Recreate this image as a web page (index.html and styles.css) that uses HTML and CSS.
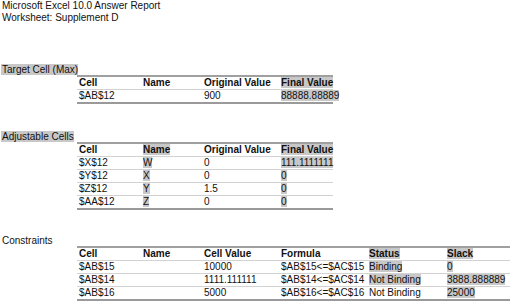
FILE: index.html
```html
<!DOCTYPE html>
<html>
<head>
<meta charset="utf-8">
<link rel="stylesheet" href="styles.css">
</head>
<body>
<div class="report">
  <div class="title">Microsoft Excel 10.0 Answer Report</div>
  <div class="title">Worksheet: Supplement D</div>

  <div class="label label-target"><span class="hl">Target Cell (Max)</span></div>
  <table class="grid grid-narrow">
    <colgroup><col class="c1"><col class="c2"><col class="c3"><col class="c4n"></colgroup>
    <thead>
      <tr><th>Cell</th><th>Name</th><th>Original Value</th><th><span class="hl">Final Value</span></th></tr>
    </thead>
    <tbody>
      <tr><td>$AB$12</td><td></td><td>900</td><td><span class="hl">88888.88889</span></td></tr>
    </tbody>
  </table>

  <div class="label label-adj"><span class="hl">Adjustable Cells</span></div>
  <table class="grid grid-narrow">
    <colgroup><col class="c1"><col class="c2"><col class="c3"><col class="c4n"></colgroup>
    <thead>
      <tr><th>Cell</th><th><span class="hl">Name</span></th><th>Original Value</th><th><span class="hl">Final Value</span></th></tr>
    </thead>
    <tbody>
      <tr><td>$X$12</td><td><span class="hl">W</span></td><td>0</td><td><span class="hl">111.1111111</span></td></tr>
      <tr><td>$Y$12</td><td><span class="hl">X</span></td><td>0</td><td><span class="hl">0</span></td></tr>
      <tr><td>$Z$12</td><td><span class="hl">Y</span></td><td>1.5</td><td><span class="hl">0</span></td></tr>
      <tr><td>$AA$12</td><td><span class="hl">Z</span></td><td>0</td><td><span class="hl">0</span></td></tr>
    </tbody>
  </table>

  <div class="label label-con">Constraints</div>
  <table class="grid grid-wide">
    <colgroup><col class="c1"><col class="c2"><col class="c3"><col class="c4"><col class="c5"><col class="c6"></colgroup>
    <thead>
      <tr><th>Cell</th><th>Name</th><th>Cell Value</th><th>Formula</th><th><span class="hl">Status</span></th><th><span class="hl">Slack</span></th></tr>
    </thead>
    <tbody>
      <tr><td>$AB$15</td><td></td><td>10000</td><td>$AB$15&lt;=$AC$15</td><td><span class="hl">Binding</span></td><td><span class="hl">0</span></td></tr>
      <tr><td>$AB$14</td><td></td><td>1111.111111</td><td>$AB$14&lt;=$AC$14</td><td><span class="hl">Not Binding</span></td><td><span class="hl">3888.888889</span></td></tr>
      <tr><td>$AB$16</td><td></td><td>5000</td><td>$AB$16&lt;=$AC$16</td><td>Not Binding</td><td><span class="hl">25000</span></td></tr>
    </tbody>
  </table>
</div>
</body>
</html>
```

FILE: styles.css
```css
html, body {
  margin: 0;
  padding: 0;
  background: #ffffff;
}

.report {
  font-family: "Liberation Sans", Arial, sans-serif;
  font-size: 10px;
  color: #111;
  width: 510px;
  overflow: hidden;
}

.title {
  line-height: 12px;
  padding-left: 2px;
}

.label {
  line-height: 11px;
  padding-left: 1px;
}

.label-target { margin-top: 40px; }
.label-adj { margin-top: 27px; }
.label-con { margin-top: 25px; padding-left: 2px; }

.hl {
  background: #c8c8c8;
}

.label .hl {
  padding-left: 1px;
}

.grid {
  margin-left: 77px;
  border-collapse: collapse;
  table-layout: fixed;
  border-top: 2px solid #a0a0a0;
  border-bottom: 2px solid #9a9a9a;
}

.grid-narrow { width: 256px; }
.grid-wide { width: 433px; }

.c1 { width: 64px; }
.c2 { width: 61px; }
.c3 { width: 77px; }
.c4n { width: 54px; }
.c4 { width: 88px; }
.c5 { width: 78px; }
.c6 { width: 65px; }

.grid th,
.grid td {
  padding: 0 0 0 2px;
  height: 12px;
  line-height: 12px;
  text-align: left;
  white-space: nowrap;
  overflow: visible;
  vertical-align: middle;
}

.grid th {
  font-weight: bold;
}

.grid tr + tr td,
.grid tbody tr:first-child td {
  border-top: 1px solid #d2d2d2;
}
```
